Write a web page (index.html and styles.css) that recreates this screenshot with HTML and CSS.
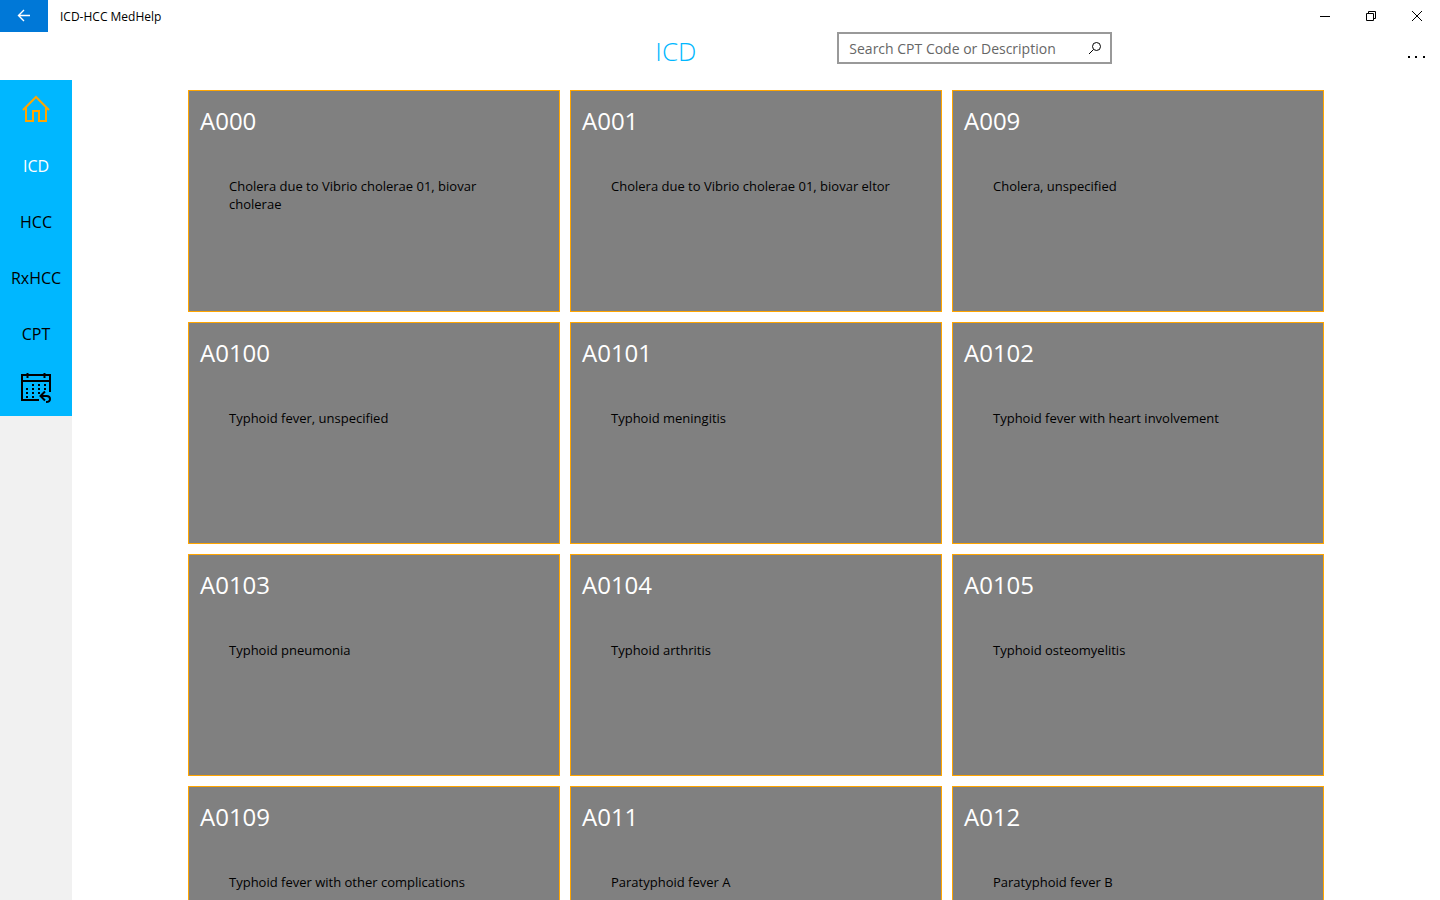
FILE: index.html
```html
<!DOCTYPE html>
<html lang="en">
<head>
<meta charset="UTF-8">
<meta name="viewport" content="width=device-width, initial-scale=1.0">
<title>ICD-HCC MedHelp</title>
<link rel="stylesheet" href="styles.css">
</head>
<body>

<div class="titlebar">
  <button class="back" aria-label="Back">
    <svg width="14" height="14" viewBox="0 0 14 14"><path d="M13 6.500H1.500M7 1L1.500 6.500L7 12"/></svg>
  </button>
  <span class="app-name">ICD-HCC MedHelp</span>
  <button class="win-btn" aria-label="Minimize">
    <svg width="10" height="10" viewBox="0 0 10 10"><path d="M0 5.500H10"/></svg>
  </button>
  <button class="win-btn" aria-label="Restore">
    <svg width="10" height="10" viewBox="0 0 10 10"><path d="M.5 2.500H7.500V9.500H.5ZM2.500 2.500V.5H9.500V7.500H7.500"/></svg>
  </button>
  <button class="win-btn" aria-label="Close">
    <svg width="10" height="10" viewBox="0 0 10 10"><path d="M0 0L10 10M10 0L0 10"/></svg>
  </button>
</div>

<header class="header">
  <h1>ICD</h1>
  <form class="search">
    <input type="text" aria-label="Search CPT Code or Description" placeholder="Search CPT Code or Description">
    <button type="button" aria-label="Search">
      <svg width="14" height="14" viewBox="0 0 14 14"><circle cx="8.500" cy="5.500" r="4"/><path d="M5.500 8.500L1 13"/></svg>
    </button>
  </form>
  <button class="more" aria-label="More">
    <svg width="18" height="4" viewBox="0 0 18 4"><path d="M1 2h2v2H1zM8 2h2v2H8zM16 2h2v2h-2z"/></svg>
  </button>
</header>

<div class="page">
  <nav class="sidebar">
    <a href="#home" class="home" aria-label="Home">
      <svg width="28" height="28" viewBox="0 0 28 28"><path d="M1 16L14 3L27 16M4 13.500V27H11V17H17V27H24V13.500"/></svg>
    </a>
    <a href="#icd" class="label active">ICD</a>
    <a href="#hcc" class="label">HCC</a>
    <a href="#rxhcc" class="label">RxHCC</a>
    <a href="#cpt" class="label">CPT</a>
    <a href="#calendar" class="calendar" aria-label="Calendar">
      <svg width="32" height="32" viewBox="0 0 32 32">
        <path d="M19 28H2V3H30V20M2 9H30M7.500 1V6M24.500 1V6"/>
        <path class="dots" d="M12 13H26M6 17H26M6 21H20M6 25H14"/>
        <path d="M25 19.500L20.500 24L25 28.500M21 24H26.500Q30 24 30 27Q30 30 26 30"/>
      </svg>
    </a>
  </nav>

  <main class="codes">
    <article class="card"><h2>A000</h2><p>Cholera due to Vibrio cholerae 01, biovar cholerae</p></article>
    <article class="card"><h2>A001</h2><p>Cholera due to Vibrio cholerae 01, biovar eltor</p></article>
    <article class="card"><h2>A009</h2><p>Cholera, unspecified</p></article>
    <article class="card"><h2>A0100</h2><p>Typhoid fever, unspecified</p></article>
    <article class="card"><h2>A0101</h2><p>Typhoid meningitis</p></article>
    <article class="card"><h2>A0102</h2><p>Typhoid fever with heart involvement</p></article>
    <article class="card"><h2>A0103</h2><p>Typhoid pneumonia</p></article>
    <article class="card"><h2>A0104</h2><p>Typhoid arthritis</p></article>
    <article class="card"><h2>A0105</h2><p>Typhoid osteomyelitis</p></article>
    <article class="card"><h2>A0109</h2><p>Typhoid fever with other complications</p></article>
    <article class="card"><h2>A011</h2><p>Paratyphoid fever A</p></article>
    <article class="card"><h2>A012</h2><p>Paratyphoid fever B</p></article>
  </main>
</div>

</body>
</html>
```
FILE: styles.css
```css
* {
  box-sizing: border-box;
}
body {
  margin: 0;
  height: 100vh;
  display: flex;
  flex-direction: column;
  overflow: hidden;
  font-family: "Open Sans", "Noto Sans", sans-serif;
  color: #000;
  background: #fff;
}
h1, h2, p {
  margin: 0;
}
button {
  display: flex;
  align-items: center;
  justify-content: center;
  padding: 0;
  border: none;
  background: none;
  cursor: pointer;
}
svg {
  display: block;
  fill: none;
  stroke: currentColor;
}

/* Window title bar */
.titlebar {
  display: flex;
  align-items: center;
  flex: none;
  height: 32px;
}
.back {
  width: 48px;
  height: 32px;
  color: #fff;
  background: #0078d7;
}
.back svg {
  stroke-width: 1.4;
}
.app-name {
  flex: 1;
  padding-left: 12px;
  font-size: 12px;
}
.win-btn {
  width: 46px;
  height: 32px;
  color: #000;
}

/* Page heading and search */
.header {
  display: grid;
  grid-template-columns: 2fr 182px 275px 1fr;
  flex: none;
  height: 48px;
}
.header h1 {
  grid-column: 2;
  font-size: 26px;
  font-weight: 300;
  line-height: 38px;
  color: #00b7ff;
}
.search {
  display: flex;
  height: 32px;
  border: 2px solid #999;
}
.search input {
  flex: 1;
  min-width: 0;
  padding: 0 0 0 10px;
  border: none;
  outline: none;
  font-family: inherit;
  font-size: 14px;
  background: none;
}
.search input::placeholder {
  color: #666;
  opacity: 1;
}
.search button {
  width: 30px;
}
.more {
  justify-self: end;
  width: 48px;
}
.more svg {
  fill: #000;
  stroke: none;
}

/* Side menu */
.page {
  display: flex;
  flex: 1;
  min-height: 0;
}
.sidebar {
  flex: none;
  width: 72px;
  background: #f1f1f1;
}
.sidebar a {
  display: flex;
  align-items: center;
  justify-content: center;
  height: 56px;
  font-size: 16px;
  color: #000;
  text-decoration: none;
  background: #00b7ff;
}
.sidebar .label {
  padding-top: 4px;
}
.sidebar svg {
  stroke-width: 2;
}
.sidebar .home {
  color: orange;
}
.sidebar .active {
  color: #fff;
}
.calendar .dots {
  stroke-dasharray: 2 4;
}

/* Code cards */
.codes {
  flex: 1;
  display: grid;
  grid-template-columns: repeat(auto-fill, 372px);
  grid-auto-rows: 222px;
  justify-content: center;
  gap: 10px;
  padding: 10px 0;
  overflow-y: auto;
  scrollbar-width: none;
}
.card {
  padding: 12px 11px;
  border: 1px solid orange;
  background: #808080;
}
.card h2 {
  font-size: 24px;
  font-weight: 400;
  line-height: 36px;
  color: #fff;
}
.card p {
  padding: 38px 29px 0;
  font-size: 13px;
  line-height: 18px;
}
```
